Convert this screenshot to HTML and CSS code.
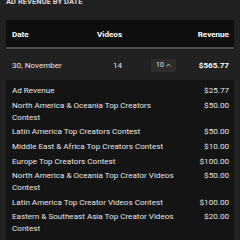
FILE: index.html
```html
<!DOCTYPE html>
<html lang="en">

<head>
    <meta charset="UTF-8">
    <meta name="viewport" content="width=device-width, initial-scale=1.0">
    <link rel="stylesheet" href="styles.css">
    <title>Ad Revenue by Date</title>
</head>

<body>
    <h2 class="title">AD REVENUE BY DATE</h2>

    <div class="table">
        <div class="row head">
            <span>Date</span>
            <span class="num">Videos</span>
            <span></span>
            <span class="num">Revenue</span>
        </div>

        <div class="row day">
            <span>30, November</span>
            <span class="num">14</span>
            <button class="toggle">10
                <svg width="5" height="4" viewBox="0 0 10 6">
                    <path d="M1 5.5 L5 1.5 L9 5.5" fill="none" stroke="#ddd" stroke-width="1.8"/>
                </svg>
            </button>
            <span class="num strong">$565.77</span>
        </div>

        <div class="details">
            <div class="item"><span>Ad Revenue</span><span class="num">$25.77</span></div>
            <div class="item"><span>North America &amp; Oceania Top Creators Contest</span><span class="num">$50.00</span></div>
            <div class="item"><span>Latin America Top Creators Contest</span><span class="num">$50.00</span></div>
            <div class="item"><span>Middle East &amp; Africa Top Creators Contest</span><span class="num">$10.00</span></div>
            <div class="item"><span>Europe Top Creators Contest</span><span class="num">$100.00</span></div>
            <div class="item"><span>North America &amp; Oceania Top Creator Videos Contest</span><span class="num">$50.00</span></div>
            <div class="item"><span>Latin America Top Creator Videos Contest</span><span class="num">$100.00</span></div>
            <div class="item"><span>Eastern &amp; Southeast Asia Top Creator Videos Contest</span><span class="num">$20.00</span></div>
            <div class="item"><span>Africa Top Creator Videos Contest</span><span class="num">$30.00</span></div>
        </div>
    </div>
</body>

</html>
```

FILE: styles.css
```css
body {
    font-family: Roboto, "Liberation Sans", sans-serif;
    background-color: #212121;
    color: #e6e6e6;
    margin: 0;
    font-size: 8.1px;
}

.title {
    margin: -2.9px 0 12.9px;
    padding: 0 6px;
    font-size: 7.6px;
    line-height: 10px;
    font-weight: 700;
    color: #d6d6d6;
}

.table {
    margin: 0 6px;
}

.row {
    display: grid;
    grid-template-columns: 85px 25px 1fr 53px;
    align-items: center;
    padding: 0 5px 0 6px;
}

.num {
    text-align: right;
}

.head {
    height: 27px;
    background-color: #0e0e0e;
    color: #fff;
    font-weight: 700;
    border-bottom: 2px solid #4b4b4b;
}

.day {
    height: 30px;
    margin-top: 1px;
}

.strong {
    font-weight: 700;
    color: #fff;
}

.toggle {
    justify-self: end;
    width: 25px;
    height: 13px;
    padding: 0;
    border: none;
    border-radius: 2px;
    background-color: #2d2d2d;
    color: #e6e6e6;
    font-family: inherit;
    font-size: 7px;
    display: flex;
    align-items: center;
    justify-content: center;
    gap: 2px;
}

.details {
    background-color: #141414;
    padding: 3.6px 5px 0 6px;
}

.item {
    display: grid;
    grid-template-columns: 166px 1fr;
    align-items: start;
    line-height: 11.7px;
    padding: 1.5px 0;
}
```
